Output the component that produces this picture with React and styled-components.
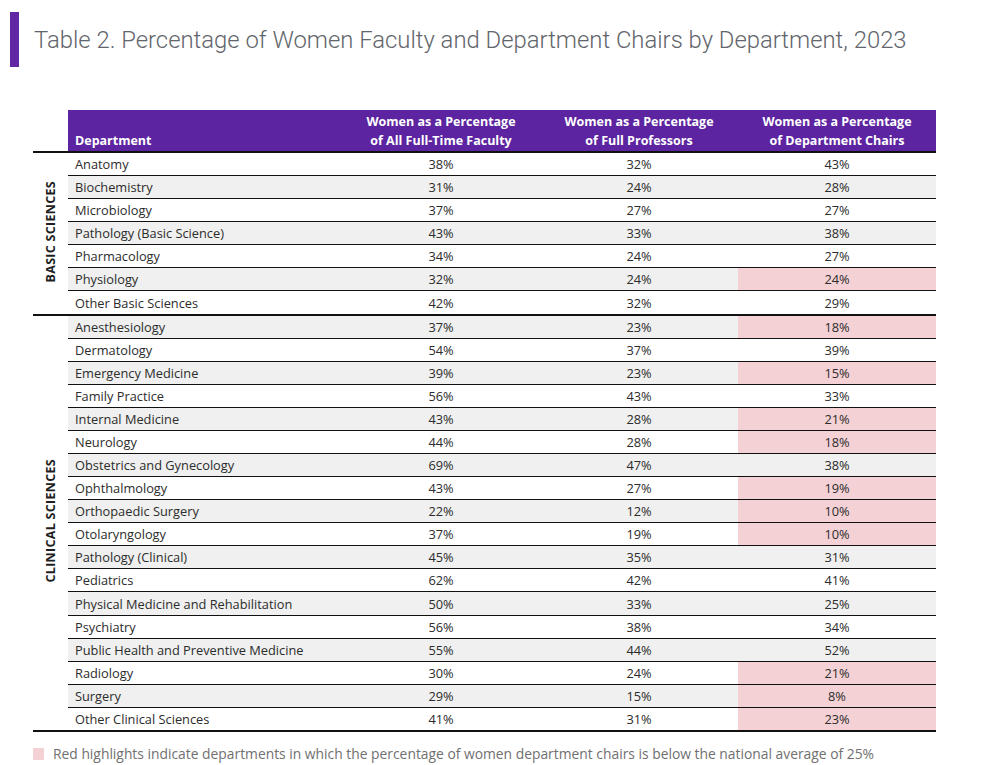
import React from 'react';
import styled, { createGlobalStyle } from 'styled-components';

const GlobalStyle = createGlobalStyle`
    body {
        margin: 0;
        background: #fff;
        font-family: 'Open Sans', 'Noto Sans', sans-serif;
    }
`;

const Page = styled.div`
    width: 990px;
    height: 765px;
    padding: 12px 0 0 10px;
    box-sizing: border-box;
    overflow: hidden;
`;

const TitleBar = styled.div`
    display: flex;
    align-items: center;
    gap: 15px;
    height: 55px;
`;

const Accent = styled.div`
    width: 9px;
    height: 100%;
    background: #6126a3;
`;

const Title = styled.h1`
    margin: 0;
    font-family: Roboto, 'Liberation Sans', sans-serif;
    font-weight: 300;
    font-size: 23.85px;
    color: #62656b;
`;

const Table = styled.table`
    margin: 43px 0 0 23px;
    border-collapse: collapse;
    table-layout: fixed;
    width: 903px;
    font-size: 12.8px;
    color: #2c2c2c;
`;

const HeadCell = styled.th`
    background: ${p => (p.$blank ? '#fff' : '#5c24a0')};
    color: #fff;
    font-weight: 700;
    font-size: 12.5px;
    line-height: 19px;
    text-align: ${p => (p.$left ? 'left' : 'center')};
    vertical-align: bottom;
    padding: 2px 0 1px ${p => (p.$left ? '7px' : '0')};
    height: 38px;
    border-bottom: 2px solid #111;
`;

const Row = styled.tr`
    background: ${p => (p.$shaded ? '#eff0ef' : '#fff')};
    border-top: ${p => (p.$first ? '2px' : '1px')} solid #111;
    &:last-child {
        border-bottom: 2px solid #111;
    }
`;

const SectionCell = styled.td`
    background: #fff;
    padding: 0;
    vertical-align: middle;
    text-align: center;
    border-top: 2px solid #111;
    border-bottom: 2px solid #111;
`;

const SectionLabel = styled.span`
    display: inline-block;
    writing-mode: vertical-rl;
    transform: rotate(180deg);
    font-weight: 700;
    font-size: 12.5px;
    letter-spacing: 0.3px;
    color: #1e1e1e;
`;

const DeptCell = styled.td`
    padding: 0 0 0 7px;
    height: 22.08px;
    white-space: nowrap;
`;

const ValueCell = styled.td`
    padding: 0;
    height: 22.08px;
    text-align: center;
    background: ${p => (p.$highlight ? '#f3d1d4' : 'transparent')};
`;

const Legend = styled.div`
    display: flex;
    align-items: center;
    gap: 9px;
    margin: 13px 0 0 23px;
    font-size: 13.85px;
    line-height: 18px;
    color: #707070;
    white-space: nowrap;
`;

const Swatch = styled.span`
    width: 11px;
    height: 12px;
    background: #f3d1d4;
`;

const sections = [
    {
        name: 'BASIC SCIENCES',
        rows: [
            ['Anatomy', 38, 32, 43],
            ['Biochemistry', 31, 24, 28],
            ['Microbiology', 37, 27, 27],
            ['Pathology (Basic Science)', 43, 33, 38],
            ['Pharmacology', 34, 24, 27],
            ['Physiology', 32, 24, 24],
            ['Other Basic Sciences', 42, 32, 29]
        ]
    },
    {
        name: 'CLINICAL SCIENCES',
        rows: [
            ['Anesthesiology', 37, 23, 18],
            ['Dermatology', 54, 37, 39],
            ['Emergency Medicine', 39, 23, 15],
            ['Family Practice', 56, 43, 33],
            ['Internal Medicine', 43, 28, 21],
            ['Neurology', 44, 28, 18],
            ['Obstetrics and Gynecology', 69, 47, 38],
            ['Ophthalmology', 43, 27, 19],
            ['Orthopaedic Surgery', 22, 12, 10],
            ['Otolaryngology', 37, 19, 10],
            ['Pathology (Clinical)', 45, 35, 31],
            ['Pediatrics', 62, 42, 41],
            ['Physical Medicine and Rehabilitation', 50, 33, 25],
            ['Psychiatry', 56, 38, 34],
            ['Public Health and Preventive Medicine', 55, 44, 52],
            ['Radiology', 30, 24, 21],
            ['Surgery', 29, 15, 8],
            ['Other Clinical Sciences', 41, 31, 23]
        ]
    }
];

const NATIONAL_AVERAGE = 25;

const App = () => {
    let index = 0;
    return (
        <Page>
            <GlobalStyle />
            <TitleBar>
                <Accent />
                <Title>Table 2. Percentage of Women Faculty and Department Chairs by Department, 2023</Title>
            </TitleBar>
            <Table>
                <colgroup>
                    <col style={{ width: 35 }} />
                    <col style={{ width: 274 }} />
                    <col style={{ width: 198 }} />
                    <col style={{ width: 198 }} />
                    <col style={{ width: 198 }} />
                </colgroup>
                <thead>
                    <tr>
                        <HeadCell $blank />
                        <HeadCell $left>Department</HeadCell>
                        <HeadCell>Women as a Percentage<br />of All Full-Time Faculty</HeadCell>
                        <HeadCell>Women as a Percentage<br />of Full Professors</HeadCell>
                        <HeadCell>Women as a Percentage<br />of Department Chairs</HeadCell>
                    </tr>
                </thead>
                {sections.map(section => (
                    <tbody key={section.name}>
                        {section.rows.map((row, i) => {
                            const shaded = index++ % 2 === 1;
                            return (
                                <Row key={row[0]} $shaded={shaded} $first={i === 0}>
                                    {i === 0 && (
                                        <SectionCell rowSpan={section.rows.length}>
                                            <SectionLabel>{section.name}</SectionLabel>
                                        </SectionCell>
                                    )}
                                    <DeptCell>{row[0]}</DeptCell>
                                    <ValueCell>{row[1]}%</ValueCell>
                                    <ValueCell>{row[2]}%</ValueCell>
                                    <ValueCell $highlight={row[3] < NATIONAL_AVERAGE}>{row[3]}%</ValueCell>
                                </Row>
                            );
                        })}
                    </tbody>
                ))}
            </Table>
            <Legend>
                <Swatch />
                Red highlights indicate departments in which the percentage of women department chairs is below the national average of 25%
            </Legend>
        </Page>
    );
};

export default App;
